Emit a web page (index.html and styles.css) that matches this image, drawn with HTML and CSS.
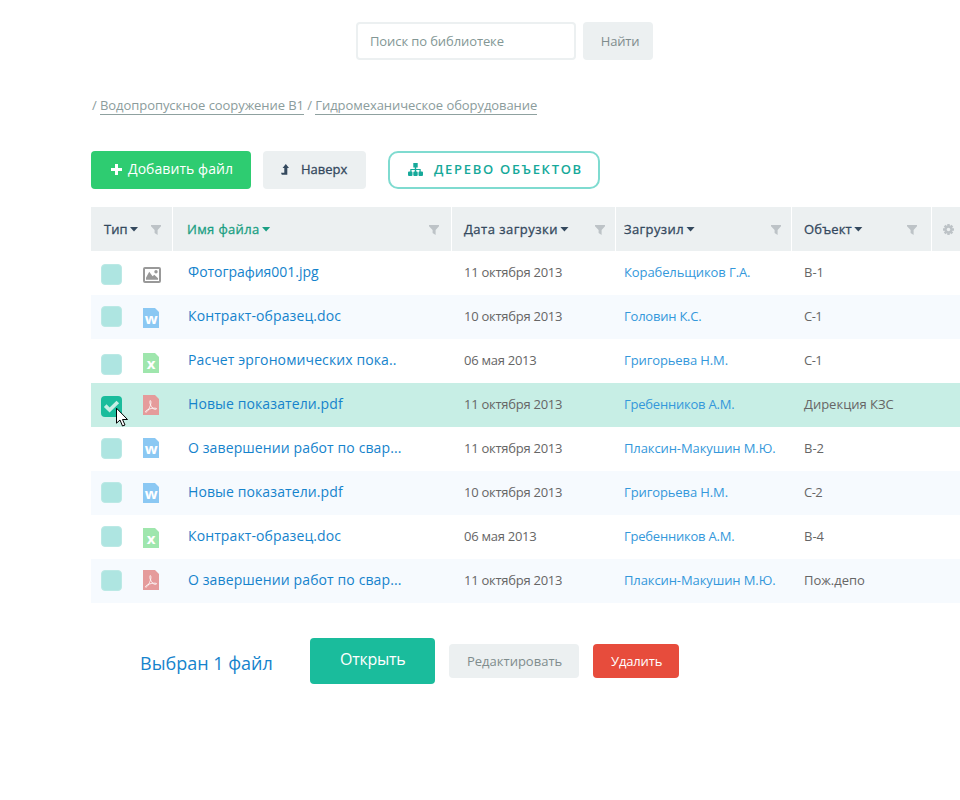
FILE: index.html
```html
<!DOCTYPE html>
<html lang="ru">
<head>
<meta charset="utf-8">
<title>Библиотека</title>
<link rel="stylesheet" href="styles.css">
</head>
<body>
<svg class="sprite" width="0" height="0">
  <symbol id="funnel" viewBox="0 0 10 10"><path d="M0 0h10v1.2L6.6 5v5L3.6 8V5L0 1.2z"/></symbol>
  <symbol id="doc" viewBox="0 0 16 20"><path d="M0 0h12l4 4v16H0z"/></symbol>
  <symbol id="acrobat" viewBox="0 0 16 20"><path fill="#e59b9b" d="M0 0h12l4 4v16H0z"/><path fill="none" stroke="#fff" stroke-opacity=".85" stroke-width=".95" stroke-linejoin="round" d="M7.3 5.500c1.2 1 .5 3.500 0 5-.8 2.200-2.600 6.500-4.500 6.700-1.500-.5 1.500-2.600 3.600-3.200 2.300-.7 5.500-1.200 7-.6.8 1-1.400 1.300-2.700.5C9 12.900 7.600 10.500 7 8.500c-.3-1.200-.2-2.500.3-3z"/></symbol>
</svg>
<main class="page">
  <form class="search">
    <input class="search-input" type="text" placeholder="Поиск по библиотеке">
    <button class="search-btn" type="button">Найти</button>
  </form>
  <nav class="crumbs">/ <a>Водопропускное сооружение В1</a> / <a>Гидромеханическое оборудование</a></nav>
  <div class="toolbar">
    <button class="btn add" type="button"><svg width="11" height="11" viewBox="0 0 11 11"><path fill="#fff" d="M4 0h3v4h4v3H7v4H4V7H0V4h4z"/></svg><span>Добавить файл</span></button>
    <button class="btn up" type="button"><svg width="8" height="11" viewBox="0 0 8 11"><path fill="#34495e" d="M4.800 0 8 4H6.300v6.800H.8L0 8.700h3.300V4H1.600z"/></svg><span>Наверх</span></button>
    <button class="btn tree" type="button"><svg width="15" height="13" viewBox="0 0 15 13"><path fill="#16a99a" d="M5.300 0h4.400v4.400H8.200v1.500h4.500v2.700H14a1 1 0 0 1 1 1V12a1 1 0 0 1-1 1h-2.500a1 1 0 0 1-1-1V9.600a1 1 0 0 1 1-1V7H8.200v1.600h.5a1 1 0 0 1 1 1V12a1 1 0 0 1-1 1H6.300a1 1 0 0 1-1-1V9.600a1 1 0 0 1 1-1h.5V7H3.500v1.600a1 1 0 0 1 1 1V12a1 1 0 0 1-1 1H1a1 1 0 0 1-1-1V9.600a1 1 0 0 1 1-1h1.300V5.900h4.500V4.400H5.300z"/></svg><span>ДЕРЕВО ОБЪЕКТОВ</span></button>
  </div>
  <section class="table">
    <div class="row head">
      <div class="h-type"><span>Тип</span><i class="caret"></i><svg class="funnel"><use href="#funnel"/></svg></div>
      <div class="h-name"><span>Имя файла</span><i class="caret"></i><svg class="funnel"><use href="#funnel"/></svg></div>
      <div class="h-date"><span>Дата загрузки</span><i class="caret"></i><svg class="funnel"><use href="#funnel"/></svg></div>
      <div class="h-user"><span>Загрузил</span><i class="caret"></i><svg class="funnel"><use href="#funnel"/></svg></div>
      <div class="h-obj"><span>Объект</span><i class="caret"></i><svg class="funnel"><use href="#funnel"/></svg></div>
      <div class="h-gear"><svg width="11" height="11" viewBox="0 0 10 10"><g stroke="#bdc3c7" stroke-width="2.200"><path d="M5 0v10M0 5h10M1.500 1.500l7 7M8.500 1.500l-7 7"/></g><circle cx="5" cy="5" r="3.800" fill="#bdc3c7"/><circle cx="5" cy="5" r="1.600" fill="#ecf0f1"/></svg></div>
    </div>
    <div class="row">
      <div class="type"><span class="check d13"></span><svg class="ic d16" width="18" height="16" viewBox="0 0 18 16"><rect x="1" y="1" width="16" height="14" rx="1" fill="#fff" stroke="#999" stroke-width="2"/><path fill="#999" d="M3 12.800v-2l3.200-6 3.400 4.500 1.700-1.500 3.700 3.500v1.500z"/><circle cx="13" cy="4.700" r="1.700" fill="#999"/></svg></div>
      <a class="name photo">Фотография001.jpg</a><span class="date">11 октября 2013</span><a class="user">Корабельщиков Г.А.</a><span class="obj">В-1</span>
    </div>
    <div class="row alt">
      <div class="type"><span class="check d11"></span><svg class="ic word d13" width="16" height="20"><use href="#doc"/><text x="8.200" y="15.800">w</text></svg></div>
      <a class="name">Контракт-образец.doc</a><span class="date">10 октября 2013</span><a class="user short">Головин К.С.</a><span class="obj code">С-1</span>
    </div>
    <div class="row">
      <div class="type"><span class="check d15"></span><svg class="ic excel d14" width="16" height="20"><use href="#doc"/><text x="8" y="15.800">x</text></svg></div>
      <a class="name">Расчет эргономических пока..</a><span class="date">06 мая 2013</span><a class="user">Григорьева Н.М.</a><span class="obj code">С-1</span>
    </div>
    <div class="row selected">
      <div class="type"><span class="check on d13"><svg width="21" height="21" viewBox="0 0 21 21"><path fill="none" stroke="#c7eee5" stroke-width="3.700" d="M4.200 9.600l4.400 4.400 8.200-8"/></svg></span><svg class="ic d12" width="16" height="20"><use href="#acrobat"/></svg>
        <svg class="cursor" width="13" height="21" viewBox="0 0 13 21"><path fill="#fff" stroke="#000" d="M.5 1.200v15l3.500-3.200 2.500 6 2.500-1-2.500-5.500h5z"/></svg></div>
      <a class="name">Новые показатели.pdf</a><span class="date">11 октября 2013</span><a class="user short">Гребенников А.М.</a><span class="obj">Дирекция КЗС</span>
    </div>
    <div class="row">
      <div class="type"><span class="check d11"></span><svg class="ic word d11" width="16" height="20"><use href="#doc"/><text x="8.200" y="15.800">w</text></svg></div>
      <a class="name">О завершении работ по свар...</a><span class="date">11 октября 2013</span><a class="user">Плаксин-Макушин М.Ю.</a><span class="obj">В-2</span>
    </div>
    <div class="row alt">
      <div class="type"><span class="check d11"></span><svg class="ic word d12" width="16" height="20"><use href="#doc"/><text x="8.200" y="15.800">w</text></svg></div>
      <a class="name">Новые показатели.pdf</a><span class="date">10 октября 2013</span><a class="user">Григорьева Н.М.</a><span class="obj code">С-2</span>
    </div>
    <div class="row">
      <div class="type"><span class="check d11"></span><svg class="ic excel d13" width="16" height="20"><use href="#doc"/><text x="8" y="15.800">x</text></svg></div>
      <a class="name">Контракт-образец.doc</a><span class="date">06 мая 2013</span><a class="user short">Гребенников А.М.</a><span class="obj">В-4</span>
    </div>
    <div class="row alt">
      <div class="type"><span class="check d11"></span><svg class="ic d11" width="16" height="20"><use href="#acrobat"/></svg></div>
      <a class="name">О завершении работ по свар...</a><span class="date">11 октября 2013</span><a class="user">Плаксин-Макушин М.Ю.</a><span class="obj">Пож.депо</span>
    </div>
  </section>
  <footer class="actions">
    <span class="count">Выбран 1 файл</span>
    <button class="btn open" type="button">Открыть</button>
    <button class="btn edit" type="button">Редактировать</button>
    <button class="btn del" type="button">Удалить</button>
  </footer>
</main>
</body>
</html>
```
FILE: styles.css
```css
* { box-sizing: border-box; }
html, body { height: 100%; }
body { margin: 0; background: #fff; overflow: hidden; font: 13px/20px "Open Sans", "Noto Sans", sans-serif; }
button, input { font: inherit; letter-spacing: inherit; border: 0; margin: 0; padding: 0; }
svg { display: block; flex: none; }
.sprite { position: absolute; }
.page { padding-left: 91px; height: 800px; overflow: hidden; }
.search { display: flex; gap: 7px; padding: 22px 0 0 265px; }
.search-input { width: 220px; height: 38px; border: 2px solid #ecf0f1; border-radius: 4px; padding: 0 12px; color: #839795; outline: 0; letter-spacing: -.1px; }
.search-input::placeholder { color: #839795; opacity: 1; }
.search-btn { width: 70px; height: 38px; border-radius: 4px; background: #ecf0f1; color: #7f8c8d; padding-left: 4px; letter-spacing: -.2px; }
.crumbs { margin-top: 36px; height: 20px; color: #8b9c9c; padding-left: 1px; white-space: nowrap; line-height: 18px; letter-spacing: -.065px; }
.crumbs a { display: inline-block; border-bottom: 1px solid #8fa1a0; }
.toolbar { display: flex; margin-top: 35px; height: 38px; }
.btn { display: flex; align-items: center; white-space: nowrap; border-radius: 4px; flex: none; }
.add { width: 160px; padding: 0 0 2px 20px; gap: 6px; background: #2ecc71; color: #fff; font-size: 14px; margin-right: 12px; letter-spacing: .06px; }
.up { width: 103px; padding: 0 0 2px 18px; gap: 12px; background: #ecf0f1; color: #34495e; -webkit-text-stroke: .3px; margin-right: 22px; }
.tree { width: 212px; padding: 0 0 2px 18px; gap: 11px; border: 2px solid #7fdbd0; border-radius: 10px; background: #fff; color: #16a99a; font-weight: 600; letter-spacing: 1.7px; }
.table { margin-top: 18px; }
.row { display: grid; grid-template-columns: 82px 279px 164px 176px 140px 28px; height: 44px; color: #666; white-space: nowrap; }
.head { background: #ecf0f1; color: #34495e; }
.head span { -webkit-text-stroke: .3px; }
.head > div { display: flex; align-items: center; border-right: 1px solid #fff; padding-left: 12px; }
.head > .h-type { padding-left: 13px; }
.head > .h-name { padding-left: 14px; color: #1a9f83; letter-spacing: .35px; }
.head > .h-date { letter-spacing: .48px; }
.head > .h-user { padding-left: 8px; letter-spacing: .4px; }
.head > .h-obj { letter-spacing: .15px; }
.head > .h-gear { border: 0; padding-left: 11px; }
.caret { width: 9px; height: 5px; background: currentColor; clip-path: polygon(0 0, 100% 0, 50% 100%); margin-left: 2px; }
.funnel { width: 10px; height: 10px; fill: #bdc3c7; margin: 1px 10px 0 auto; }
.h-type .funnel { margin-right: 11px; }
.h-name .funnel { margin-right: 12px; }
.h-obj .funnel { margin-right: 14px; }
.alt { background: #f6fafe; }
.selected { background: #c7eee5; }
.row > a, .row > span { line-height: 42px; }
.type { position: relative; display: flex; align-items: flex-start; padding-left: 10px; }
.check { width: 21px; height: 21px; border-radius: 4px; background: #aee5e1; border: 1px solid #bbe9e5; margin-right: 21px; }
.check.on { background: #1abc9c; border: 0; }
.d11 { margin-top: 11px; }
.d12 { margin-top: 12px; }
.d13 { margin-top: 13px; }
.d14 { margin-top: 14px; }
.d15 { margin-top: 15px; }
.d16 { margin-top: 16px; }
.word { fill: #8bc8f3; }
.excel { fill: #9fe6ad; }
.ic text { fill: #fff; font-size: 15px; font-weight: 700; text-anchor: middle; }
.cursor { position: absolute; left: 25px; top: 24px; }
.name { padding-left: 15px; color: #1583cc; font-size: 14px; letter-spacing: .11px; }
.photo { letter-spacing: -.03px; }
.date { padding-left: 12px; letter-spacing: -.26px; }
.user { padding-left: 8px; color: #3498db; letter-spacing: -.1px; }
.short { letter-spacing: -.22px; }
.obj { padding-left: 12px; }
.code { letter-spacing: -.5px; }
.actions { display: flex; margin-top: 35px; padding-left: 49px; height: 46px; align-items: center; }
.count { width: 170px; font-size: 18px; color: #1583cc; padding-top: 3px; }
.open { width: 125px; height: 46px; padding: 0 0 4px 30px; background: #1abc9c; color: #fff; font-size: 16px; margin-right: 14px; letter-spacing: -.25px; }
.edit { width: 130px; height: 34px; padding-left: 18px; background: #ecf0f1; color: #7f8c8d; margin-right: 14px; }
.del { width: 86px; height: 34px; padding-left: 18px; background: #e74c3c; color: #fff; letter-spacing: -.15px; }
```
